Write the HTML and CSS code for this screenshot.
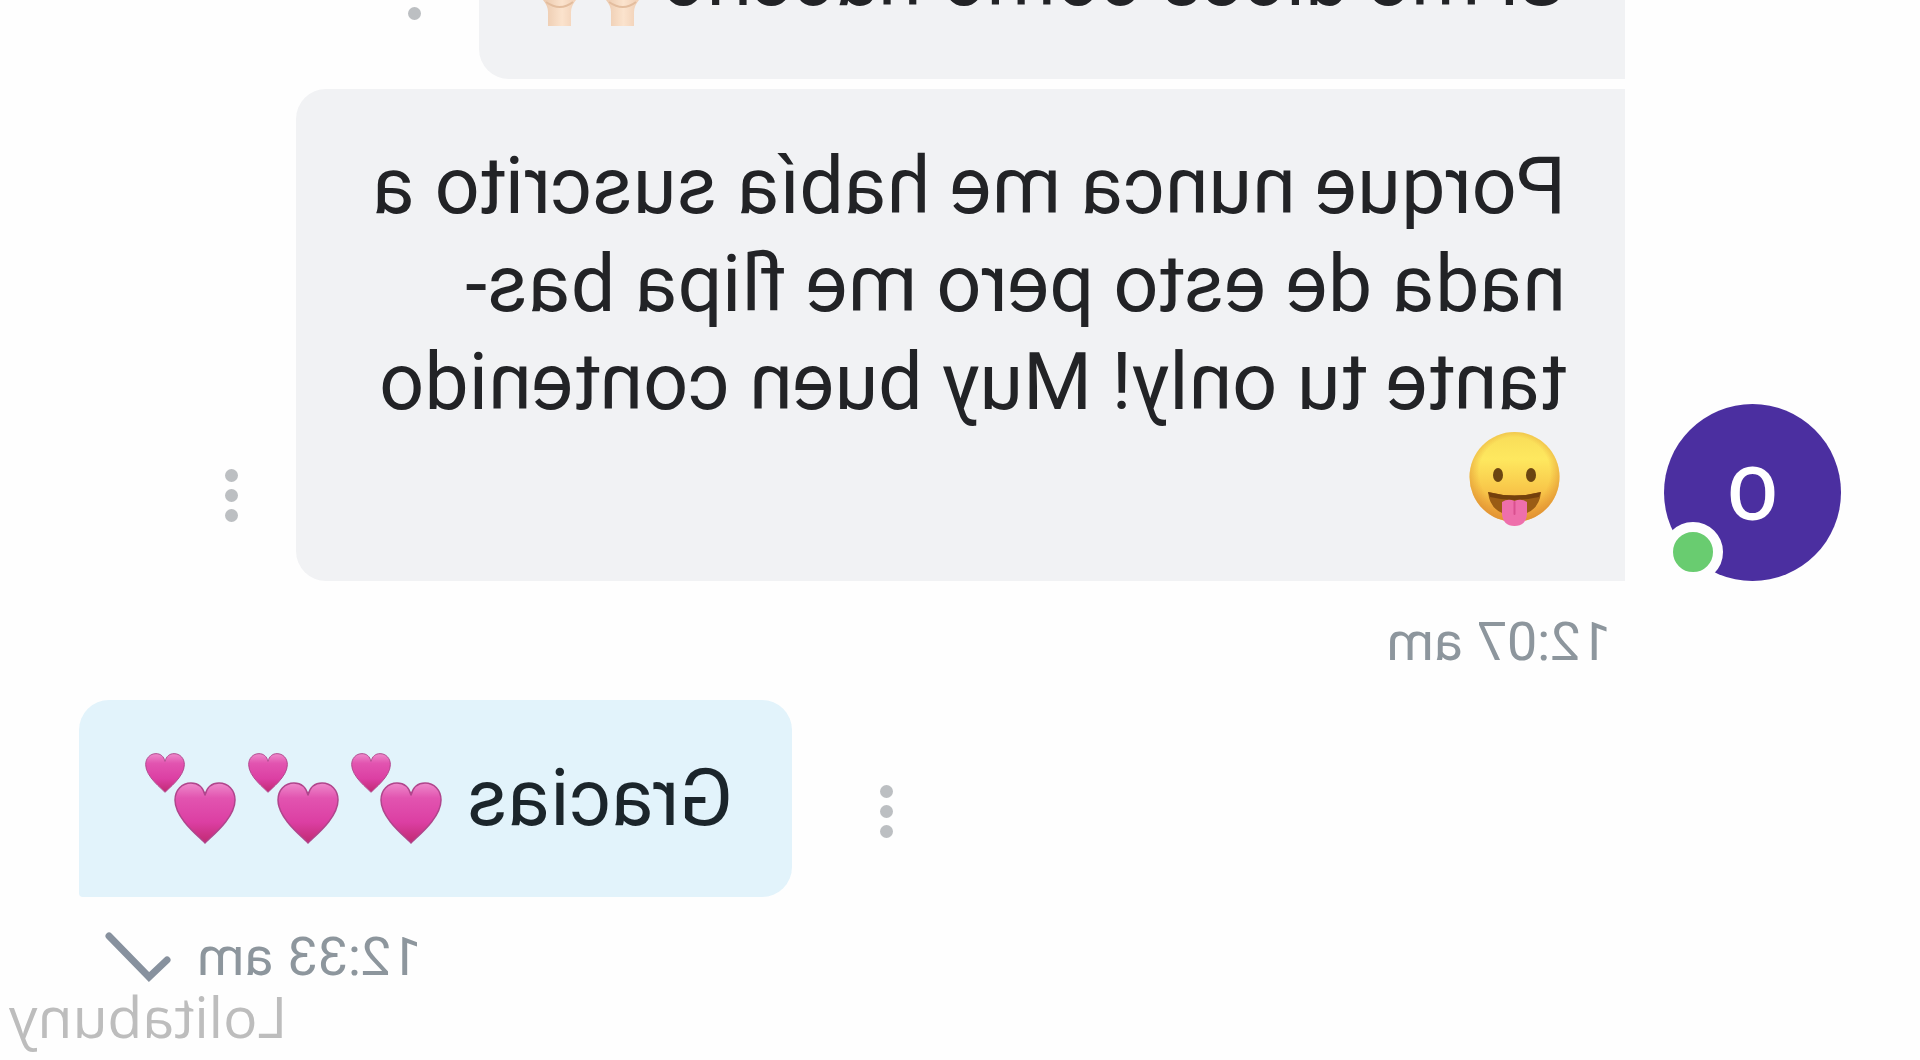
FILE: index.html
```html
<!DOCTYPE html>
<html lang="es">
<head>
<meta charset="utf-8">
<meta name="viewport" content="width=device-width, initial-scale=1">
<title>Chat</title>
<link rel="stylesheet" href="styles.css">
</head>
<body>
<svg class="defs" aria-hidden="true">
  <defs>
    <linearGradient id="heart-fill" x1="0" y1="0" x2="0" y2="1">
      <stop offset="0" stop-color="#ee8acb"/>
      <stop offset="0.25" stop-color="#e254b0"/>
      <stop offset="0.65" stop-color="#dc3fa3"/>
      <stop offset="1" stop-color="#c02a72"/>
    </linearGradient>
    <linearGradient id="face-fill" x1="0" y1="0" x2="0" y2="1">
      <stop offset="0" stop-color="#f8dc58"/>
      <stop offset="0.3" stop-color="#fee85f"/>
      <stop offset="0.6" stop-color="#f9cb4c"/>
      <stop offset="1" stop-color="#ee9f38"/>
    </linearGradient>
    <radialGradient id="face-edge" cx="0.5" cy="0.45" r="0.56">
      <stop offset="0.7" stop-color="#e0862a" stop-opacity="0"/>
      <stop offset="1" stop-color="#d98a30" stop-opacity="0.7"/>
    </radialGradient>
    <linearGradient id="skin-fill" x1="0" y1="0" x2="1" y2="0">
      <stop offset="0" stop-color="#eecbb0"/>
      <stop offset="0.45" stop-color="#fbe3cd"/>
      <stop offset="1" stop-color="#e9c5a8"/>
    </linearGradient>
    <symbol id="heart" viewBox="0 0 62 62">
      <path d="M31 61 C27 56 1 37 1 18 C1 8 8 1 17 1 C24 1 29 5 31 13 C33 5 38 1 45 1 C54 1 61 8 61 18 C61 37 35 56 31 61 Z" fill="url(#heart-fill)" stroke="#b0458c" stroke-width="1.5" stroke-linejoin="round"/>
    </symbol>
    <symbol id="two-hearts" viewBox="0 0 103 94">
      <use href="#heart" x="56" y="3" width="40" height="40"/>
      <use href="#heart" x="5" y="32" width="62" height="62"/>
    </symbol>
  </defs>
</svg>

<main class="chat">
  <article class="row incoming">
    <div class="avatar-slot"></div>
    <p class="bubble">Si me dices como hacerlo <svg class="emoji" viewBox="3 0 103 94" role="img" aria-label="manos levantadas">
      <path d="M14 8 Q24 -2 34 8 L42 44 Q43 63 38 70 Q33 76 33 82 V96 H10 V82 Q10 76 5 70 Q1 63 4 44 Z" fill="url(#skin-fill)"/>
      <path d="M89 8 Q79 -2 69 8 L65 44 Q63 63 68 70 Q73 76 73 82 V96 H96 V82 Q96 76 101 70 Q106 63 100 44 Z" fill="url(#skin-fill)"/>
      <path d="M8 72 Q21 82 35 72 M71 72 Q84 82 98 72" fill="none" stroke="#e3bd9e" stroke-width="2"/>
    </svg></p>
    <button class="menu" type="button" aria-label="Opciones"><svg viewBox="0 0 13 53"><circle cx="6.5" cy="6.5" r="6.5"/><circle cx="6.5" cy="26.5" r="6.5"/><circle cx="6.5" cy="46.5" r="6.5"/></svg></button>
  </article>

  <article class="row incoming">
    <div class="avatar-slot">
      <div class="avatar">O<span class="online"></span></div>
    </div>
    <p class="bubble">Porque nunca me había suscrito a nada de esto pero me flipa bas&shy;tante tu only! Muy buen contenido <svg class="emoji" viewBox="0 0 103 94" role="img" aria-label="cara sacando la lengua">
      <circle cx="51.5" cy="45" r="45" fill="url(#face-fill)"/>
      <circle cx="51.5" cy="45" r="45" fill="url(#face-edge)"/>
      <ellipse cx="35" cy="43" rx="5" ry="7" fill="#6b4511"/>
      <ellipse cx="68" cy="43" rx="5" ry="7" fill="#6b4511"/>
      <path d="M25 60 Q51.500 67 78 60 Q76 82 51.500 84 Q27 82 25 60 Z" fill="#9a5c14"/>
      <path d="M25 60 Q51.500 67 78 60 L76 65 Q51.500 71 27 65 Z" fill="#74400d"/>
      <path d="M39 70 Q45 66 51.500 69 Q58 66 64 70 V82 Q63 94 51.500 94 Q40 94 39 82 Z" fill="#ee6fab"/>
      <path d="M51.500 70 V82" stroke="#d9508f" stroke-width="2" stroke-linecap="round"/>
    </svg></p>
    <button class="menu" type="button" aria-label="Opciones"><svg viewBox="0 0 13 53"><circle cx="6.5" cy="6.5" r="6.5"/><circle cx="6.5" cy="26.5" r="6.5"/><circle cx="6.5" cy="46.5" r="6.5"/></svg></button>
  </article>
  <div class="stamp stamp-incoming"><time datetime="00:07">12:07 am</time></div>

  <article class="row outgoing">
    <button class="menu" type="button" aria-label="Opciones"><svg viewBox="0 0 13 53"><circle cx="6.5" cy="6.5" r="6.5"/><circle cx="6.5" cy="26.5" r="6.5"/><circle cx="6.5" cy="46.5" r="6.5"/></svg></button>
    <p class="bubble">Gracias <svg class="emoji" role="img" aria-label="dos corazones"><use href="#two-hearts"/></svg><svg class="emoji" role="img" aria-label="dos corazones"><use href="#two-hearts"/></svg><svg class="emoji" role="img" aria-label="dos corazones"><use href="#two-hearts"/></svg></p>
  </article>
  <div class="stamp stamp-outgoing">
    <time datetime="00:33">12:33 am</time>
    <svg class="check" viewBox="0 0 66 50" role="img" aria-label="Enviado"><path d="M4 28 L22 45 L62 4"/></svg>
  </div>

  <div class="watermark">Lolitabuny</div>
</main>
</body>
</html>
```
FILE: styles.css
```css
* {
  box-sizing: border-box;
}

body {
  margin: 0;
  background: #fefefe;
  font-family: Roboto, "Liberation Sans", sans-serif;
  overflow: hidden;
}

.defs {
  position: absolute;
  width: 0;
  height: 0;
}

/* The conversation is shown as a mirror image, scrolled to its end. */
.chat {
  position: relative;
  display: flex;
  flex-direction: column;
  justify-content: flex-end;
  height: 100vh;
  padding: 0 79px 71px;
  overflow: hidden;
  transform: scaleX(-1);
}

.row {
  display: flex;
  flex: none;
  align-items: flex-end;
}

.incoming {
  padding-right: 146px;
  margin-top: 10px;
}

.outgoing {
  justify-content: flex-end;
}

.bubble {
  margin: 0;
  background: #f1f2f4;
  color: #222326;
  font-size: 79px;
}

.incoming .bubble {
  padding: 48px 59px 52px;
  border-radius: 0 30px 30px 0;
  line-height: 98px;
}

.outgoing .bubble {
  padding: 49px 59px;
  border-radius: 30px 30px 4px 30px;
  background: #e2f3fb;
  color: #1b252b;
  line-height: 99px;
}

.emoji {
  width: 103px;
  height: 94px;
  vertical-align: -19px;
  overflow: visible;
}

.menu {
  flex: none;
  margin: 0 0 59px 58px;
  padding: 0;
  border: 0;
  background: none;
  cursor: pointer;
}

.outgoing .menu {
  margin: 0 88px 59px 0;
}

.menu svg {
  display: block;
  width: 13px;
  height: 53px;
  fill: #bcbfc2;
}

.avatar-slot {
  flex: none;
  width: 177px;
  margin-right: 39px;
}

.avatar {
  position: relative;
  height: 177px;
  border-radius: 50%;
  background: #4b2fa0;
  color: #fff;
  font-size: 74px;
  font-weight: 500;
  line-height: 181px;
  text-align: center;
}

.online {
  position: absolute;
  right: -1px;
  bottom: -1px;
  width: 60px;
  height: 60px;
  border: 10px solid #fefefe;
  border-radius: 50%;
  background: #69cc70;
}

.stamp {
  display: flex;
  flex: none;
  align-items: center;
  color: #8d969d;
  font-size: 54px;
  line-height: 64px;
}

.stamp-incoming {
  margin: 29px 0 26px 230px;
}

.stamp-outgoing {
  justify-content: flex-end;
  gap: 26px;
  margin: 28px 26px 0 0;
}

.check {
  width: 66px;
  height: 50px;
  fill: none;
  stroke: #87919e;
  stroke-width: 7;
  stroke-linecap: round;
}

.watermark {
  position: absolute;
  right: 9px;
  bottom: 5px;
  color: #bdbdbd;
  font-family: "Open Sans", "Noto Sans", sans-serif;
  font-size: 57px;
  line-height: 78px;
}
```
